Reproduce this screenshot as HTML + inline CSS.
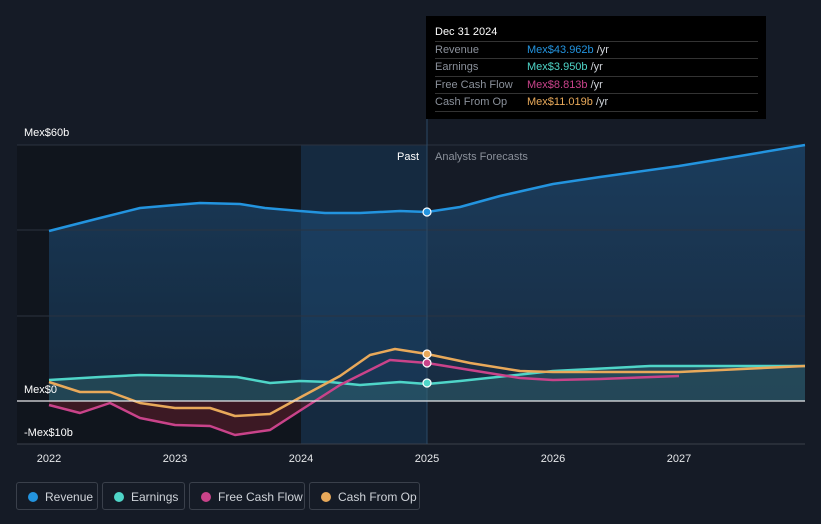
<!DOCTYPE html>
<html><head><meta charset="utf-8"><style>
body{margin:0;background:#151b26;width:821px;height:524px;overflow:hidden;font-family:"Liberation Sans",sans-serif;}
.leg{position:absolute;top:482px;height:28px;border:1px solid #3a404b;border-radius:3px;color:#cfd3d9;font-size:12px;line-height:28px;box-sizing:border-box;padding-left:28px}
.leg i{position:absolute;left:11px;top:9px;width:10px;height:10px;border-radius:50%}
</style></head><body>
<svg width="821" height="524" style="position:absolute;left:0;top:0" font-family="Liberation Sans, sans-serif">
<defs>
<linearGradient id="rg" x1="0" y1="0" x2="0" y2="1"><stop offset="0" stop-color="#1d4a73" stop-opacity=".7"/><stop offset="1" stop-color="#1d4a73" stop-opacity=".35"/></linearGradient>
</defs>
<rect x="17" y="145" width="284" height="299" fill="#10151d"/>
<rect x="301" y="145" width="126" height="299" fill="#152a40"/>
<polygon fill="url(#rg)" points="49,231 100,218 140,208 175,205 200,203 240,204 265,208 300,211 325,213 360,213 400,211 427,212 460,207 500,196 553,184 600,177 679,166 740,156 805,145 805,401 49,401"/>
<g stroke="#2b3340" stroke-width="1"><line x1="17" y1="145" x2="805" y2="145"/><line x1="17" y1="230" x2="805" y2="230"/><line x1="17" y1="316" x2="805" y2="316"/></g>
<line x1="17" y1="444" x2="805" y2="444" stroke="#3a404b"/>
<line x1="427" y1="20" x2="427" y2="444" stroke="#2c4a66"/>
<polygon fill="#5a1c2a" fill-opacity=".6" points="49,405 80,413 110,403 140,418 175,425 210,426 235,435 270,430 301,410 330,392 330,401 49,401"/>
<polygon fill="#3d7b82" fill-opacity=".35" points="49,380 100,377 140,375 200,376 237,377 270,383 300,381 330,382 360,385 400,382 427,384 460,381 553,371 650,366 805,366 805,401 49,401"/>
<polyline fill="none" stroke="#4fd5c8" stroke-width="2.5" stroke-linejoin="round" points="49,380 100,377 140,375 200,376 237,377 270,383 300,381 330,382 360,385 400,382 427,384 460,381 553,371 650,366 805,366"/>
<polyline fill="none" stroke="#c9438a" stroke-width="2.5" stroke-linejoin="round" points="49,405 80,413 110,403 140,418 175,425 210,426 235,435 270,430 301,410 340,385 390,360 427,363 470,370 520,378 553,380 600,379 679,376"/>
<polyline fill="none" stroke="#e8a95a" stroke-width="2.5" stroke-linejoin="round" points="49,382 80,392 110,392 140,403 175,408 210,408 235,416 270,414 301,397 340,376 370,355 395,349 427,354 470,363 520,371 553,372 679,372 805,366"/>
<polyline fill="none" stroke="#2394df" stroke-width="2.5" stroke-linejoin="round" points="49,231 100,218 140,208 175,205 200,203 240,204 265,208 300,211 325,213 360,213 400,211 427,212 460,207 500,196 553,184 600,177 679,166 740,156 805,145"/>
<line x1="17" y1="401" x2="805" y2="401" stroke="#e6e8ea" stroke-width="1.2"/>
<g stroke="#fff" stroke-width="1.2"><circle cx="427" cy="212" r="4" fill="#2394df"/><circle cx="427" cy="354" r="4" fill="#e8a95a"/><circle cx="427" cy="363" r="4" fill="#c9438a"/><circle cx="427" cy="383" r="4" fill="#4fd5c8"/></g>
<g fill="#fff" font-size="11"><text x="24" y="136">Mex$60b</text><text x="24" y="393">Mex$0</text><text x="24" y="436">-Mex$10b</text></g>
<text x="419" y="160" fill="#fff" font-size="11" text-anchor="end">Past</text>
<text x="435" y="160" fill="#8b919b" font-size="11">Analysts Forecasts</text>
<g fill="#e6e8ea" font-size="11" text-anchor="middle"><text x="49" y="462">2022</text><text x="175" y="462">2023</text><text x="301" y="462">2024</text><text x="427" y="462">2025</text><text x="553" y="462">2026</text><text x="679" y="462">2027</text></g>
<rect x="426" y="16" width="340" height="103" fill="#000"/>
<g stroke="#333" stroke-width="1"><line x1="435" y1="41.5" x2="758" y2="41.5"/><line x1="435" y1="58.5" x2="758" y2="58.5"/><line x1="435" y1="76.5" x2="758" y2="76.5"/><line x1="435" y1="93.5" x2="758" y2="93.5"/><line x1="435" y1="111.5" x2="758" y2="111.5"/></g>
<text x="435" y="35" fill="#fff" font-size="11">Dec 31 2024</text>
<g font-size="11"><text x="435" y="53" fill="#8b919b">Revenue</text><text x="435" y="70" fill="#8b919b">Earnings</text><text x="435" y="88" fill="#8b919b">Free Cash Flow</text><text x="435" y="105" fill="#8b919b">Cash From Op</text>
<text x="527" y="53" fill="#2394df">Mex$43.962b <tspan fill="#cfd3d9">/yr</tspan></text>
<text x="527" y="70" fill="#4fd5c8">Mex$3.950b <tspan fill="#cfd3d9">/yr</tspan></text>
<text x="527" y="88" fill="#c9438a">Mex$8.813b <tspan fill="#cfd3d9">/yr</tspan></text>
<text x="527" y="105" fill="#e8a95a">Mex$11.019b <tspan fill="#cfd3d9">/yr</tspan></text></g>
</svg>
<div class="leg" style="left:16px;width:82px"><i style="background:#2394df"></i>Revenue</div>
<div class="leg" style="left:102px;width:83px"><i style="background:#4fd5c8"></i>Earnings</div>
<div class="leg" style="left:189px;width:116px"><i style="background:#c9438a"></i>Free Cash Flow</div>
<div class="leg" style="left:309px;width:111px"><i style="background:#e8a95a"></i>Cash From Op</div>
</body></html>
